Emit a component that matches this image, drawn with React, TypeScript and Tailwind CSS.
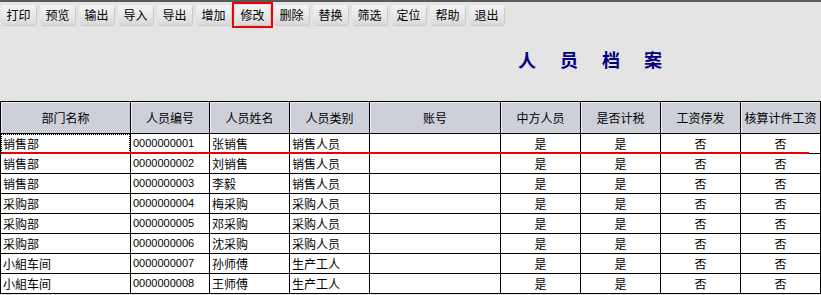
import React from 'react';

const buttons = ['打印', '预览', '输出', '导入', '导出', '增加', '修改', '删除', '替换', '筛选', '定位', '帮助', '退出'];

const columns = [
  { title: '部门名称', w: 'w-[130px]' },
  { title: '人员编号', w: 'w-[79px]' },
  { title: '人员姓名', w: 'w-[80px]' },
  { title: '人员类别', w: 'w-[80px]' },
  { title: '账号', w: 'w-[131px]' },
  { title: '中方人员', w: 'w-[80px]' },
  { title: '是否计税', w: 'w-[80px]' },
  { title: '工资停发', w: 'w-[80px]' },
  { title: '核算计件工资', w: 'w-[80px]' },
];

const rows = [
  ['销售部', '0000000001', '张销售', '销售人员'],
  ['销售部', '0000000002', '刘销售', '销售人员'],
  ['销售部', '0000000003', '李毅', '销售人员'],
  ['采购部', '0000000004', '梅采购', '采购人员'],
  ['采购部', '0000000005', '邓采购', '采购人员'],
  ['采购部', '0000000006', '沈采购', '采购人员'],
  ['小組车间', '0000000007', '孙师傅', '生产工人'],
  ['小組车间', '0000000008', '王师傅', '生产工人'],
];

const cjk = "font-['Noto_Sans_CJK_SC',sans-serif]";

export default function App() {
  return (
    <div className={`w-[821px] h-[295px] overflow-hidden bg-[#e4e4e4] text-black ${cjk}`}>
      {/* toolbar */}
      <div className="border-t-2 border-[#5a5a5a] h-[25px] pt-[3px] pl-[1px] flex gap-[4px]">
        {buttons.map((b) => (
          <button
            key={b}
            className="relative w-[35px] h-[20px] rounded-[3px] bg-gradient-to-b from-[#f4f4f4] via-[#e9e9e9] to-[#d8d8d8] shadow-[1px_1px_1px_#c8c8c8] text-[12px] leading-[20px] text-black"
          >
            {b}
            {b === '修改' && <span className="absolute -inset-[3px] border-2 border-[#ee0000]" />}
          </button>
        ))}
      </div>

      {/* title */}
      <div className="h-[76px] pt-[24px] pl-[518px] flex gap-[24px] text-[18px] leading-[20px] font-bold text-[#000080]">
        <span>人</span>
        <span>员</span>
        <span>档</span>
        <span>案</span>
      </div>

      {/* table */}
      <div className="relative w-[821px] border-t border-l border-black bg-white">
        <div className="flex bg-[#cdd0d8]">
          {columns.map((c) => (
            <div
              key={c.title}
              className={`${c.w} h-[32px] shrink-0 border-r border-b border-black shadow-[inset_1px_1px_0_#eef0f4] flex items-center justify-center text-[12px] whitespace-nowrap`}
            >
              {c.title}
            </div>
          ))}
        </div>
        {rows.map((r, i) => (
          <div key={r[1]} className="flex h-[20px] text-[12px] leading-[19px]">
            <div className="w-[130px] shrink-0 border-r border-b border-black pl-[2px] relative">
              {i === 0 && <div className="absolute inset-0 border border-dotted border-black" />}
              {r[0]}
            </div>
            <div className="w-[79px] shrink-0 border-r border-b border-black pl-[2px] font-['Liberation_Sans',sans-serif] text-[11px]">
              {r[1]}
            </div>
            <div className="w-[80px] shrink-0 border-r border-b border-black pl-[2px]">{r[2]}</div>
            <div className="w-[80px] shrink-0 border-r border-b border-black pl-[2px]">{r[3]}</div>
            <div className="w-[131px] shrink-0 border-r border-b border-black" />
            <div className="w-[80px] shrink-0 border-r border-b border-black text-center">是</div>
            <div className="w-[80px] shrink-0 border-r border-b border-black text-center">是</div>
            <div className="w-[80px] shrink-0 border-r border-b border-black text-center">否</div>
            <div className="w-[80px] shrink-0 border-r border-b border-black text-center">否</div>
          </div>
        ))}
        {/* red annotation line */}
        <div className="absolute left-[1px] top-[50px] w-[807px] h-[2px] bg-[#ee0000]" />
      </div>
    </div>
  );
}
